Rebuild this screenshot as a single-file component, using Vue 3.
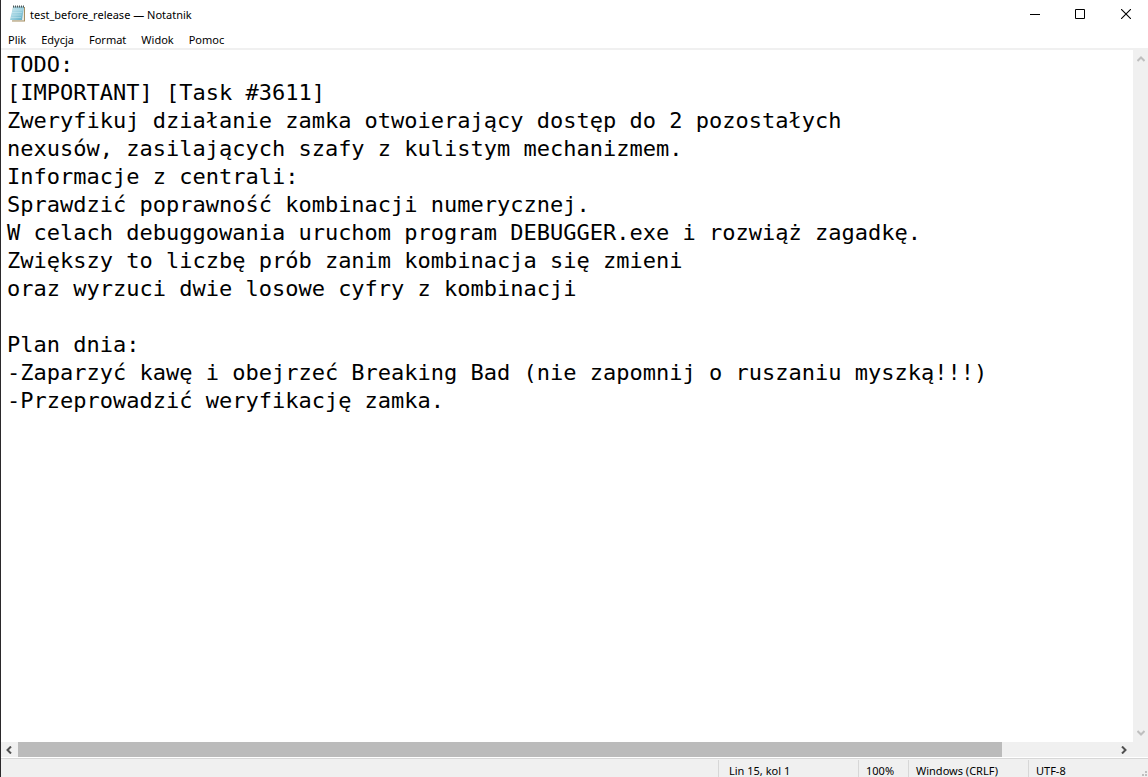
<script setup>
import { ref } from 'vue'

const menu = ['Plik', 'Edycja', 'Format', 'Widok', 'Pomoc']
const text = ref(`TODO:
[IMPORTANT] [Task #3611]
Zweryfikuj działanie zamka otwoierający dostęp do 2 pozostałych
nexusów, zasilających szafy z kulistym mechanizmem.
Informacje z centrali:
Sprawdzić poprawność kombinacji numerycznej.
W celach debuggowania uruchom program DEBUGGER.exe i rozwiąż zagadkę.
Zwiększy to liczbę prób zanim kombinacja się zmieni
oraz wyrzuci dwie losowe cyfry z kombinacji

Plan dnia:
-Zaparzyć kawę i obejrzeć Breaking Bad (nie zapomnij o ruszaniu myszką!!!)
-Przeprowadzić weryfikację zamka.`)
</script>

<template>
  <div class="window">
    <header class="titlebar">
      <svg class="app-icon" width="16" height="18" viewBox="0 0 16 18" aria-hidden="true">
        <defs>
          <linearGradient id="page" x1="0" y1="0" x2="1" y2="1">
            <stop offset="0" stop-color="#c4e6ee" />
            <stop offset="0.5" stop-color="#9bd0df" />
            <stop offset="1" stop-color="#58a9c2" />
          </linearGradient>
        </defs>
        <path d="M4 2h12v14.500H3z" fill="#a58f62" />
        <path d="M4 2h11v13.500H3z" fill="#e9e9e3" />
        <path d="M4 2h11l-2 13H1z" fill="url(#page)" />
        <path d="M3.500 5h10M3 7.500h10M2.500 10h10M2 12.500h10" stroke="#d6f0f5" stroke-width="0.600" opacity="0.700" />
        <path d="M4 2h11" stroke="#7da7b0" />
        <path d="M4.500 0.500v2M6.500 0.500v2M8.500 0.500v2M10.500 0.500v2M12.500 0.500v2M14.500 0.500v2" stroke="#4c5759" />
      </svg>
      <h1>test_before_release — Notatnik</h1>
      <div class="controls">
        <button type="button" aria-label="Minimalizuj">
          <svg width="10" height="10" viewBox="0 0 10 10"><path d="M0 5.500h10" stroke="#000" /></svg>
        </button>
        <button type="button" aria-label="Maksymalizuj">
          <svg width="10" height="10" viewBox="0 0 10 10"><path d="M.5.5h9v9h-9z" fill="none" stroke="#000" /></svg>
        </button>
        <button class="close" type="button" aria-label="Zamknij">
          <svg width="10" height="10" viewBox="0 0 10 10"><path d="M0 0l10 10M10 0L0 10" stroke="#000" stroke-width="1.100" /></svg>
        </button>
      </div>
    </header>
    <nav class="menubar">
      <button v-for="item in menu" :key="item" type="button">{{ item }}</button>
    </nav>
    <main class="editor">
      <textarea v-model="text" aria-label="Edytor tekstu" wrap="off" spellcheck="false"></textarea>
      <div class="vscroll">
        <button type="button" aria-label="W górę">
          <svg width="8" height="6" viewBox="0 0 8 6"><path d="M.5 5L4 1.500 7.500 5" fill="none" stroke="#bfbfbf" stroke-width="2" /></svg>
        </button>
        <button type="button" aria-label="W dół">
          <svg width="8" height="6" viewBox="0 0 8 6"><path d="M.5 1L4 4.500 7.500 1" fill="none" stroke="#bfbfbf" stroke-width="2" /></svg>
        </button>
      </div>
    </main>
    <div class="hscroll">
      <button type="button" aria-label="W lewo">
        <svg width="7" height="8" viewBox="0 0 7 8"><path d="M5 .5L1.500 4 5 7.500" fill="none" stroke="#505050" stroke-width="2" /></svg>
      </button>
      <div class="track"><div class="thumb"></div></div>
      <button type="button" aria-label="W prawo">
        <svg width="7" height="8" viewBox="0 0 7 8"><path d="M1 .5L4.500 4 1 7.500" fill="none" stroke="#505050" stroke-width="2" /></svg>
      </button>
    </div>
    <footer class="statusbar">
      <span class="position">Lin 15, kol 1</span>
      <span class="zoom">100%</span>
      <span class="eol">Windows (CRLF)</span>
      <span class="encoding">UTF-8</span>
      <svg class="grip" width="6" height="6" viewBox="0 0 6 6" aria-hidden="true">
        <path d="M3 0h2v2h-2zM0 3h2v2h-2zM3 3h2v2h-2z" fill="#bfbfbf" />
      </svg>
    </footer>
  </div>
</template>

<style>
body {
  margin: 0;
}
</style>

<style scoped>
.window {
  display: flex;
  flex-direction: column;
  box-sizing: border-box;
  height: 100vh;
  overflow: hidden;
  border-left: 1px solid #2b292b;
  background: #fff;
  color: #000;
  font-family: "Noto Sans", "Open Sans", sans-serif;
  font-size: 11px;
}
button {
  display: flex;
  align-items: center;
  justify-content: center;
  box-sizing: border-box;
  padding: 0;
  border: 0;
  background: none;
  color: inherit;
  font: inherit;
}
.titlebar {
  display: flex;
  align-items: center;
  flex: none;
  height: 28px;
  padding-left: 8px;
}
.app-icon {
  margin-right: 5px;
}
h1 {
  flex: 1;
  margin: 0;
  font-size: 11px;
  font-weight: 400;
}
.controls {
  display: flex;
  align-self: stretch;
}
.controls button {
  width: 45px;
}
.controls .close {
  width: 46px;
  padding-left: 2px;
}
.menubar {
  display: flex;
  flex: none;
  gap: 15px;
  height: 20px;
  padding: 0 7px;
  border-bottom: 2px solid #f0f0f0;
}
.menubar button {
  padding-top: 2px;
}
.editor {
  display: flex;
  flex: 1;
  min-height: 0;
}
textarea {
  flex: 1;
  min-width: 0;
  padding: 1px 6px;
  border: 0;
  outline: 0;
  resize: none;
  overflow: hidden;
  background: #fff;
  color: #000;
  font-family: "DejaVu Sans Mono", monospace;
  font-size: 22px;
  line-height: 28px;
}
.vscroll {
  display: flex;
  flex-direction: column;
  justify-content: space-between;
  width: 15px;
  background: #f0f0f0;
}
.vscroll button {
  height: 18px;
}
.hscroll {
  display: flex;
  flex: none;
  height: 15px;
  padding-right: 15px;
  background: #f0f0f0;
}
.hscroll button {
  width: 17px;
}
.track {
  flex: 1;
}
.thumb {
  width: 89.6%;
  height: 100%;
  background: #bbb;
}
.statusbar {
  display: flex;
  position: relative;
  flex: none;
  justify-content: flex-end;
  height: 18px;
  margin-top: 1px;
  border-top: 1px solid #d7d7d7;
  background: #f0f0f0;
  line-height: 22px;
}
.statusbar span {
  box-sizing: border-box;
  margin-top: 1px;
  padding-left: 7px;
  border-left: 1px solid #d7d7d7;
  white-space: nowrap;
}
.statusbar .position {
  width: 140px;
  padding-left: 10px;
}
.statusbar .zoom {
  width: 50px;
}
.eol,
.encoding {
  width: 120px;
}
.grip {
  position: absolute;
  right: 0;
  bottom: 0;
}
</style>
